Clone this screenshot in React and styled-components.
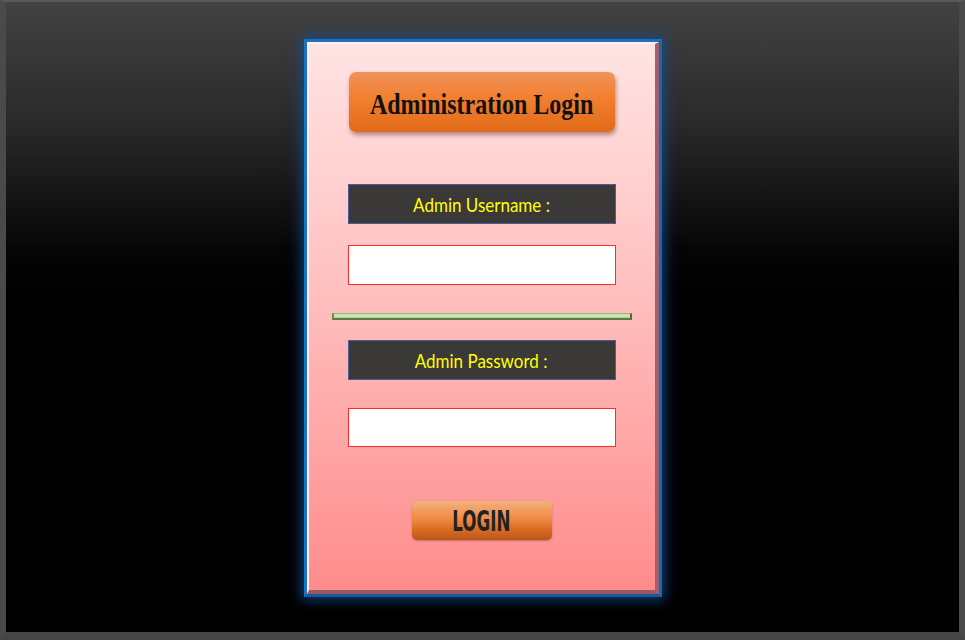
import React from "react";
import styled, { createGlobalStyle } from "styled-components";

const Global = createGlobalStyle`
  html, body { margin: 0; padding: 0; background: #000; }
  #root { width: 965px; height: 640px; }
`;

const Frame = styled.div`
  box-sizing: border-box;
  width: 965px;
  height: 640px;
  border-top: 2px solid #5a5a5a;
  border-left: 6px solid #4a4a4a;
  border-right: 6px solid #4a4a4a;
  border-bottom: 8px solid #454545;
  background: linear-gradient(to bottom, #424242 0px, #2a2a2a 120px, #050505 250px, #000 300px);
  display: flex;
  justify-content: center;
  align-items: flex-start;
`;

const Panel = styled.div`
  box-sizing: border-box;
  margin-top: 37px;
  width: 358px;
  height: 558px;
  border: 3px solid #1a72c4;
  border-bottom-color: #185a9a;
  border-right-color: #1a66b0;
  box-shadow: 0 0 12px 3px rgba(20, 80, 150, 0.75);
  display: flex;
`;

const Card = styled.div`
  box-sizing: border-box;
  flex: 1;
  border-top: 2px solid #ffeeee;
  border-left: 2px solid #ffeeee;
  border-right: 4px solid #a0606a;
  border-bottom: 4px solid #9a5a62;
  background: linear-gradient(to bottom, #ffe3e3 0%, #ffc4c4 40%, #ff8c8c 100%);
  display: flex;
  flex-direction: column;
  align-items: center;
  padding-top: 28px;
`;

const TitleBox = styled.div`
  box-sizing: border-box;
  width: 266px;
  height: 60px;
  border-radius: 7px;
  background: linear-gradient(to bottom, #f0925c 0%, #f27f2e 45%, #e06a18 100%);
  box-shadow: 1px 3px 4px rgba(90, 40, 30, 0.45);
  display: flex;
  align-items: center;
  justify-content: center;
`;

const TitleText = styled.span`
  display: inline-block;
  font-family: "Liberation Serif", "Times New Roman", serif;
  font-weight: bold;
  font-size: 30px;
  line-height: 1;
  white-space: nowrap;
  color: #111;
  transform: scaleX(0.8);
  margin-top: 3px;
`;

const Label = styled.div`
  box-sizing: border-box;
  width: 268px;
  height: 40px;
  margin-top: ${(p) => p.$mt}px;
  background: #3a3938;
  border: 1px solid #4a5d98;
  display: flex;
  align-items: center;
  justify-content: center;
`;

const LabelText = styled.span`
  display: inline-block;
  font-family: Lato, "Open Sans", sans-serif;
  font-size: 20px;
  line-height: 1;
  white-space: nowrap;
  color: #ffff00;
  transform: scaleX(0.85);
`;

const Input = styled.input`
  box-sizing: border-box;
  display: block;
  width: 268px;
  height: ${(p) => p.$h}px;
  margin-top: ${(p) => p.$mt}px;
  background: #fff;
  border: 1px solid #ff2a2a;
  outline: none;
  padding: 0 6px;
`;

const Separator = styled.div`
  box-sizing: border-box;
  width: 300px;
  height: 7px;
  margin-top: 28px;
  background: linear-gradient(to bottom, #b8dc98 0%, #d4f0b8 45%, #a8cc88 100%);
  border-top: 1px solid #98b880;
  border-left: 2px solid #6a8a58;
  border-right: 2px solid #4a6a40;
  border-bottom: 2px solid #5a7a4a;
`;

const LoginButton = styled.button`
  box-sizing: border-box;
  width: 140px;
  height: 39px;
  margin-top: 54px;
  border: none;
  border-radius: 5px;
  background: linear-gradient(to bottom, #f2b27e 0%, #f08a44 45%, #d86a22 75%, #b8561a 100%);
  box-shadow: 0 1px 2px rgba(120, 50, 20, 0.4);
  padding: 0;
  cursor: pointer;
  display: flex;
  align-items: center;
  justify-content: center;
`;

const LoginText = styled.span`
  display: inline-block;
  font-family: "DejaVu Sans Condensed", "DejaVu Sans", sans-serif;
  font-weight: bold;
  font-size: 29px;
  line-height: 1;
  color: #222;
  transform: scaleX(0.64);
  margin-top: 2px;
`;

export default function App() {
  return (
    <>
      <Global />
      <Frame>
        <Panel>
          <Card>
            <TitleBox>
              <TitleText>Administration Login</TitleText>
            </TitleBox>
            <Label $mt={52}>
              <LabelText>Admin Username :</LabelText>
            </Label>
            <Input type="text" $mt={21} $h={40} />
            <Separator />
            <Label $mt={20}>
              <LabelText>Admin Password :</LabelText>
            </Label>
            <Input type="password" $mt={28} $h={39} />
            <LoginButton>
              <LoginText>LOGIN</LoginText>
            </LoginButton>
          </Card>
        </Panel>
      </Frame>
    </>
  );
}
